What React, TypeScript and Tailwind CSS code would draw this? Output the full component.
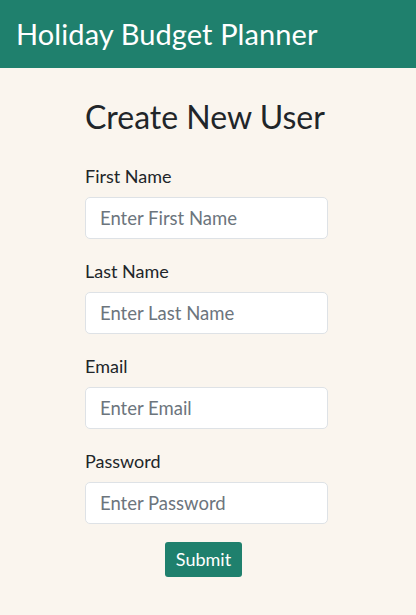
export default function App() {
  const fields = [
    { label: "First Name", placeholder: "Enter First Name", type: "text" },
    { label: "Last Name", placeholder: "Enter Last Name", type: "text" },
    { label: "Email", placeholder: "Enter Email", type: "email" },
    { label: "Password", placeholder: "Enter Password", type: "password" },
  ]

  return (
    <div className="min-h-[615px] bg-[#faf5ee] font-['Lato',sans-serif]">
      <header className="h-[68px] bg-[#1f806d] flex items-center px-4">
        <h1 className="text-[29px] text-white tracking-[0.1px]">Holiday Budget Planner</h1>
      </header>

      <div className="w-[243px] ml-[85px] pt-[29px]">
        <h2 className="text-[32px] text-[#212529] leading-tight">Create New User</h2>

        <form className="mt-[27px]" onSubmit={(e) => e.preventDefault()}>
          {fields.map((field, i) => (
            <div key={field.label} className={i < fields.length - 1 ? "mb-[20px]" : "mb-[18px]"}>
              <label className="block text-[18px] text-[#212529] mb-[9px] leading-[24px]">{field.label}</label>
              <input
                type={field.type}
                placeholder={field.placeholder}
                className="w-full h-[42px] bg-white border border-[#dee2e6] rounded-[5px] px-[14px] text-[18.5px] placeholder:text-[#6c757d] outline-none"
              />
            </div>
          ))}

          <div className="flex justify-center -ml-[6px]">
            <button
              type="submit"
              className="h-[35px] px-[11px] bg-[#1f806d] text-white text-[18px] rounded-[3px]"
            >
              Submit
            </button>
          </div>
        </form>
      </div>
    </div>
  )
}
